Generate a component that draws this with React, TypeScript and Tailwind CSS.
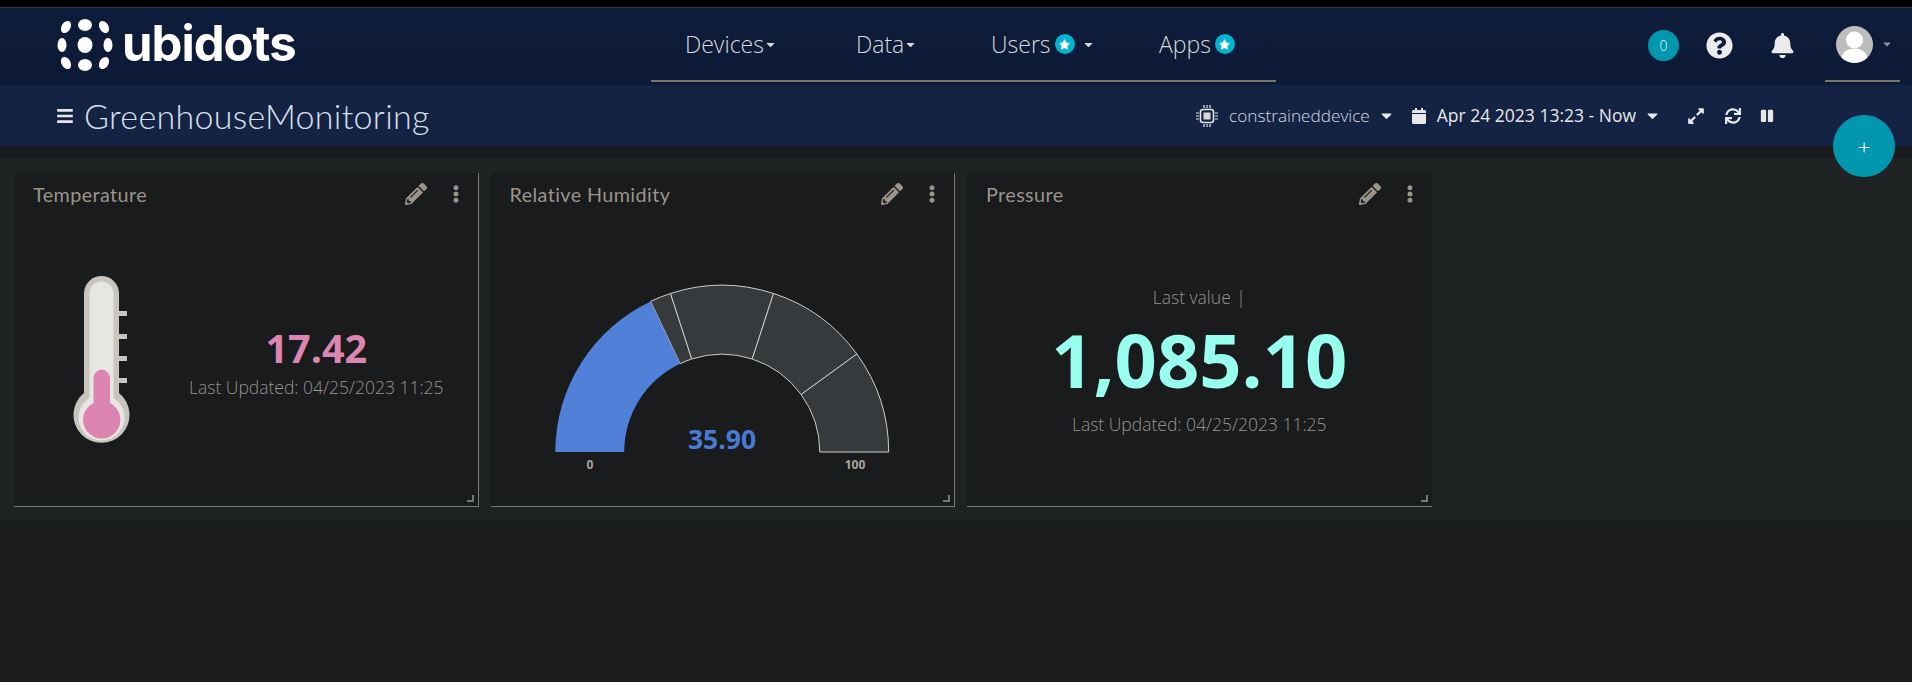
import { FaBars, FaBell, FaCalendar, FaCaretDown, FaEllipsisV, FaExpandAlt, FaPause, FaPencilAlt, FaQuestionCircle, FaStar, FaSync } from "react-icons/fa";

const open = "font-['Open_Sans',sans-serif]";

function StarBadge() {
  return (
    <span className="ml-[4px] flex h-[20px] w-[20px] items-center justify-center rounded-full bg-[#00b4d4] text-[11px] text-white">
      <FaStar />
    </span>
  );
}

function Logo() {
  return (
    <div className="flex items-center">
      <svg width="56" height="56" viewBox="0 0 56 56" fill="#fff">
        <ellipse cx="28" cy="28" rx="7.5" ry="8" />
        <ellipse cx="28" cy="8" rx="7" ry="6" />
        <ellipse cx="28" cy="48" rx="7" ry="6" />
        <ellipse cx="5" cy="28" rx="4.5" ry="7" />
        <ellipse cx="51" cy="28" rx="4.5" ry="7" />
        <ellipse cx="9" cy="10" rx="4.5" ry="6.5" transform="rotate(30 9 10)" />
        <ellipse cx="47" cy="10" rx="4.5" ry="6.5" transform="rotate(-30 47 10)" />
        <ellipse cx="9" cy="46" rx="4.5" ry="6.5" transform="rotate(-30 9 46)" />
        <ellipse cx="47" cy="46" rx="4.5" ry="6.5" transform="rotate(30 47 46)" />
      </svg>
      <span className="mt-[-3px] ml-[9px] font-['Inter',sans-serif] text-[49px] leading-none font-bold tracking-[-1px] text-white">ubidots</span>
    </div>
  );
}

function Chip() {
  return (
    <svg width="24" height="24" viewBox="0 0 24 24" fill="none" stroke="#e4e4e4">
      <rect x="5.5" y="5.5" width="13" height="13" rx="2.5" strokeWidth="1.6" />
      <rect x="8.5" y="8.5" width="7" height="7" fill="#d8d8d8" stroke="none" />
      <path d="M9 1v3M12 1v3M15 1v3M9 20v3M12 20v3M15 20v3M1 9h3M1 12h3M1 15h3M20 9h3M20 12h3M20 15h3" strokeWidth="1.2" />
    </svg>
  );
}

function Card({ title, children, last }: { title: string; children: React.ReactNode; last?: boolean }) {
  return (
    <div className={`relative flex h-[334px] w-[464.5px] flex-col border-b border-[#77787a] bg-[#191b1d] ${last ? "" : "border-r"}`}>
      <div className="flex h-[42px] shrink-0 items-start justify-between pt-[8px] pr-[13px] pl-[19px] text-[#9b948a]">
        <span className="font-['Lato',sans-serif] text-[19.800px] leading-[26px] tracking-[0.4px]">{title}</span>
        <span className="flex items-center gap-[20px] pt-[2px] text-[22px]">
          <FaPencilAlt />
          <FaEllipsisV className="text-[18px]" />
        </span>
      </div>
      <div className="relative min-h-0 flex-1">{children}</div>
      <span className="absolute right-[4px] bottom-[4px] h-[7px] w-[7px] border-r-2 border-b-2 border-[#77787a]" />
    </div>
  );
}

function Thermometer() {
  return (
    <svg width="62" height="176" viewBox="0 0 62 176">
      <path d="M49 35h8v5h-8zM49 58h8v5h-8zM49 80h8v5h-8zM49 102h8v5h-8z" fill="#c8c5bf" />
      <path d="M14 17.500a17.500 17.500 0 0 1 35 0V117a28 28 0 1 1-35 0Z" fill="#c8c5bf" />
      <path d="M19.500 17.500a12 12 0 0 1 24 0V122a23 23 0 1 1-24 0Z" fill="#e8e6e3" />
      <path d="M23.500 102a8.250 8.250 0 0 1 16.500 0V127a18.700 18.700 0 1 1-16.500 0Z" fill="#dc85b0" />
    </svg>
  );
}

function polar(r: number, pct: number) {
  const a = Math.PI * (1 - pct / 100);
  return `${(175 + r * Math.cos(a)).toFixed(2)} ${(170 - r * Math.sin(a)).toFixed(2)}`;
}

function sector(from: number, to: number) {
  const R = 166.7;
  const r = 97.8;
  return `M${polar(R, from)}A${R} ${R} 0 0 1 ${polar(R, to)}L${polar(r, to)}A${r} ${r} 0 0 0 ${polar(r, from)}Z`;
}

function Gauge() {
  return (
    <svg width="350" height="205" viewBox="0 0 350 205" className={open}>
      {[
        [35.9, 40],
        [40, 60],
        [60, 80],
        [80, 100],
      ].map(([a, b]) => (
        <path key={a} d={sector(a, b)} fill="#373a3c" stroke="#cfcdc8" strokeWidth="1" />
      ))}
      <path d={sector(0, 35.9)} fill="#5180d8" />
      <text x="175" y="167" textAnchor="middle" fontSize="26.500" fontWeight="700" fill="#4a7bd4">35.90</text>
      <text x="43" y="187" textAnchor="middle" fontSize="12" fontWeight="700" fill="#a9a59d">0</text>
      <text x="308" y="187" textAnchor="middle" fontSize="12" fontWeight="700" fill="#a9a59d">100</text>
    </svg>
  );
}

export default function App() {
  return (
    <div className={`min-h-[682px] bg-[#191b1d] ${open}`}>
      <div className="h-[8px] border-b border-[#3a3a3a] bg-black" />
      <header className="flex h-[77px] bg-gradient-to-b from-[#0d1c3a] to-[#0d1a36] text-[#d8d8d8]">
        <div className="w-[651px] pt-[9px] pl-[57px]">
          <Logo />
        </div>
        <nav className="flex h-[74px] w-[625px] items-center border-b-2 border-[#7a7568] pl-[34px] text-[23px] font-light">
          <span className="flex w-[171px] items-center">Devices<FaCaretDown className="text-[13px]" /></span>
          <span className="flex w-[135px] items-center">Data<FaCaretDown className="text-[13px]" /></span>
          <span className="flex w-[168px] items-center">Users<StarBadge /><FaCaretDown className="ml-[7px] text-[13px]" /></span>
          <span className="flex items-center">Apps<StarBadge /></span>
        </nav>
        <div className="ml-[372px] flex h-[74px] items-center">
          <span className="flex h-[31px] w-[31px] items-center justify-center rounded-full bg-[#0097ae] text-[14px] font-light text-[#dff]">0</span>
          <FaQuestionCircle className="ml-[27px] text-[27px] text-[#ebebeb]" />
          <FaBell className="ml-[37px] text-[25px] text-[#ebebeb]" />
          <div className="ml-[30px] flex h-[74px] w-[75px] items-center justify-center border-b-2 border-[#7a7568]">
            <svg width="37" height="37" viewBox="0 0 37 37" className="ml-[3px] rounded-full bg-[#bdbdbd]">
              <circle cx="18.500" cy="14" r="8.500" fill="#fff" />
              <ellipse cx="18.500" cy="33" rx="13" ry="10.500" fill="#fff" />
            </svg>
            <FaCaretDown className="ml-[8px] text-[12px] text-[#8f8f8f]" />
          </div>
        </div>
      </header>
      <div className="flex h-[61px] items-center bg-[#142244] pr-[138px] pl-[56px] text-[#e8e8e8]">
        <FaBars className="text-[18px]" />
        <span className="ml-[10px] font-['Lato',sans-serif] text-[34px] font-light tracking-[0.3px] text-[#d8e0ea]">GreenhouseMonitoring</span>
        <div className="ml-auto flex items-center text-[17.500px]">
          <Chip />
          <span className="ml-[10px] text-[17.200px] font-light text-[#d5dae2]">constraineddevice</span>
          <FaCaretDown className="ml-[8px] text-[17px]" />
          <FaCalendar className="ml-[16px] text-[16px]" />
          <span className="ml-[10px]">Apr 24 2023 13:23 - Now</span>
          <FaCaretDown className="ml-[8px] text-[17px]" />
          <FaExpandAlt className="ml-[26px] text-[18px]" />
          <FaSync className="ml-[20px] text-[16px]" />
          <FaPause className="ml-[19px] text-[14px]" />
        </div>
      </div>
      <main className="relative border-t-[12px] border-[#1a1c1d] bg-[#1e2223] pt-[15px] pb-[14px] pl-[14px]">
        <button className="absolute top-[-43px] left-[1833px] flex h-[62px] w-[62px] items-center justify-center rounded-full bg-[#0097ae] text-[22px] font-light text-white">+</button>
        <div className="flex gap-[12px]">
          <Card title="Temperature">
            <div className="flex h-full items-start">
              <div className="mt-[61px] ml-[56px] w-[100px] shrink-0">
                <Thermometer />
              </div>
              <div className="mt-[107px] ml-[19px] flex flex-col items-center">
                <span className="text-[39.500px] leading-[53px] font-bold text-[#dc85b0]">17.42</span>
                <span className="text-[17.500px] leading-[24px] font-light text-[#9b948a]">Last Updated: 04/25/2023 11:25</span>
              </div>
            </div>
          </Card>
          <Card title="Relative Humidity">
            <div className="flex justify-center pt-[67px]">
              <Gauge />
            </div>
          </Card>
          <Card title="Pressure" last>
            <div className="flex flex-col items-center pt-[70px] text-[#9b948a]">
              <span className="text-[17.500px] leading-[24px] font-light">Last value <span className="ml-[1px]">|</span></span>
              <span className="mt-[2px] text-[74px] leading-[98px] font-bold text-[#98ffee]">1,085.10</span>
              <span className="mt-[3px] text-[17.500px] leading-[24px] font-light">Last Updated: 04/25/2023 11:25</span>
            </div>
          </Card>
        </div>
      </main>
    </div>
  );
}
